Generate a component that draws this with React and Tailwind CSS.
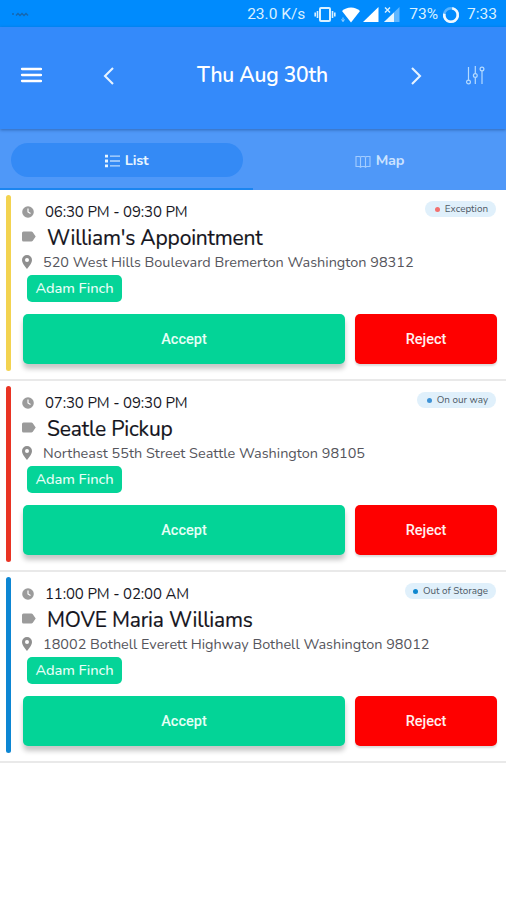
import React, { useState } from 'react';

const appointments = [
  {
    id: 1,
    time: '06:30 PM - 09:30 PM',
    title: "William's Appointment",
    address: '520 West Hills Boulevard Bremerton Washington 98312',
    assignee: 'Adam Finch',
    status: 'Exception',
    bar: 'bg-[#f3d350]',
    dot: 'bg-[#f2706f]',
    badge: 'w-[71px]',
  },
  {
    id: 2,
    time: '07:30 PM - 09:30 PM',
    title: 'Seatle Pickup',
    address: 'Northeast 55th Street Seattle Washington 98105',
    assignee: 'Adam Finch',
    status: 'On our way',
    bar: 'bg-[#e93323]',
    dot: 'bg-[#3f93d6]',
    badge: 'w-[79px]',
  },
  {
    id: 3,
    time: '11:00 PM - 02:00 AM',
    title: 'MOVE Maria Williams',
    address: '18002 Bothell Everett Highway Bothell Washington 98012',
    assignee: 'Adam Finch',
    status: 'Out of Storage',
    bar: 'bg-[#0d86d3]',
    dot: 'bg-[#0f87cf]',
    badge: 'w-[91px]',
  },
];

function StatusBar() {
  return (
    <div className="flex h-[27px] items-center justify-between bg-[#008bfd] pl-[11px] pr-[9px] pt-[2px] font-['Roboto',sans-serif] text-[15.5px] text-[#d9f0ff]">
      <svg width="20" height="8" viewBox="0 0 20 8" fill="none" stroke="#1c5f9c" strokeWidth="1.300" opacity="0.8">
        <path d="M1 3h2M5 4.500l2-2 2 2 2-2 2 2 2-2 2 2" />
      </svg>
      <div className="flex items-center">
        <span className="whitespace-nowrap pt-px">23.0 K/s</span>
        <svg className="ml-[9px]" width="22" height="18" viewBox="0 0 22 18" fill="none" stroke="#d9f0ff">
          <rect x="6" y="2" width="10" height="13" rx="1" strokeWidth="2" />
          <path d="M3.500 5v7M18.500 5v7M1.200 6.500v4M20.800 6.500v4" strokeWidth="1.600" />
        </svg>
        <svg className="ml-[5px]" width="20" height="18" viewBox="0 0 20 18" fill="#fff">
          <path d="M10 16.500 1 5C3.300 2.800 6.500 1.500 10 1.500s6.700 1.300 9 3.500z" />
          <path d="M2 11.500v4M.5 13.500 2 15.500l1.500-2" fill="none" stroke="#9fd4ff" />
        </svg>
        <svg className="ml-[2px]" width="16" height="18" viewBox="0 0 16 18" fill="#fff">
          <path d="M15.500 1v15H0z" />
        </svg>
        <svg className="ml-[5px]" width="16" height="18" viewBox="0 0 16 18">
          <path d="M15.500 1v15H0z" fill="#5fb6ff" />
          <path d="M10 6.500v9.500H0z" fill="#e8f6ff" />
          <path d="M1 1.500l5 5M6 1.500l-5 5" stroke="#d9f0ff" strokeWidth="1.400" />
        </svg>
        <span className="ml-[9px] pt-px">73%</span>
        <svg className="ml-[4px]" width="18" height="18" viewBox="0 0 18 18" fill="none" strokeWidth="2.600">
          <circle cx="9" cy="9" r="6.800" stroke="#57b2ff" />
          <path d="M9 2.200a6.800 6.800 0 1 1-6.800 6.800" stroke="#f0f9ff" transform="rotate(10 9 9)" />
        </svg>
        <span className="ml-[7px] pt-px">7:33</span>
      </div>
    </div>
  );
}

function Header() {
  return (
    <header className="relative z-10 flex h-[102px] items-center justify-between bg-[#348afa] pb-[5px] pl-[20px] pr-[21px] text-white shadow-[0_1px_3px_rgba(20,60,120,0.5)]">
      <div className="flex items-center gap-[60px]">
        <button className="pb-[2px]" aria-label="Menu">
          <svg width="22" height="16" viewBox="0 0 22 16" stroke="currentColor" strokeWidth="2.300" strokeLinecap="round">
            <path d="M2 2h19M2 8h19M2 14h19" />
          </svg>
        </button>
        <button aria-label="Previous day">
          <svg width="14" height="18" viewBox="0 0 14 18" fill="none" stroke="#e6f3ff" strokeWidth="2.100">
            <path d="M11 1 3 9l8 8" />
          </svg>
        </button>
      </div>
      <h1 className="whitespace-nowrap pt-px text-[21px] font-semibold tracking-[-0.25px]">Thu Aug 30th</h1>
      <div className="flex items-center gap-[42px]">
        <button aria-label="Next day">
          <svg width="14" height="18" viewBox="0 0 14 18" fill="none" stroke="#e6f3ff" strokeWidth="2.100">
            <path d="m3 1 8 8-8 8" />
          </svg>
        </button>
        <button aria-label="Filters">
          <svg width="20" height="20" viewBox="0 0 20 20" fill="none" stroke="#b5dbff" strokeWidth="1.200">
            <path d="M3.500 1v13.500M10.300 0v7.500M10.300 11.500V18M17 4.500V18" />
            <circle cx="3.500" cy="16" r="1.900" />
            <circle cx="10.300" cy="9.500" r="1.900" />
            <circle cx="17" cy="3" r="1.900" />
          </svg>
        </button>
      </div>
    </header>
  );
}

function Tabs({ tab, setTab }) {
  return (
    <nav className="grid h-[61px] grid-cols-2 bg-[#4f98f8] text-[14.500px] font-bold tracking-[-0.2px]">
      <button
        onClick={() => setTab('list')}
        className={`flex items-center justify-center border-b-2 pl-[11px] pr-[10px] pt-[3px] ${tab === 'list' ? 'border-[#1b85f0] text-[#e8f5ff]' : 'border-transparent text-[#cfe4ff]'}`}
      >
        <span className="flex h-[34px] w-full items-center justify-center gap-[5px] rounded-full bg-[#348af5] pr-[2px] pt-[2px]">
          <svg width="16" height="14" viewBox="0 0 16 14" fill="none" stroke="currentColor">
            <path d="M1 2.200h3M1 7h3M1 11.800h3" strokeWidth="2.800" />
            <path d="M6 2.200h10M6 7h10M6 11.800h10" strokeWidth="1.300" opacity="0.75" />
          </svg>
          List
        </span>
      </button>
      <button
        onClick={() => setTab('map')}
        className="flex items-center justify-center gap-[5px] pt-[3px] text-[#cbe2ff]"
      >
        <svg width="16" height="13" viewBox="0 0 16 13" fill="none" stroke="#a3ccff" strokeWidth="1.100">
          <path d="M1 1.500h3.500l1 .8 1-.8H9.500l1 .8 1-.8H15v10h-3.500l-1 .8-1-.8h-3l-1 .8-1-.8H1zM5.500 2.300v10M10.500 2.300v10" />
        </svg>
        Map
      </button>
    </nav>
  );
}

function AppointmentCard({ item }) {
  return (
    <li className="flex h-[191px] border-b-2 border-[#e9e9e9] pl-[6px] pr-[9px] pt-[5px]">
      <div className={`h-[176px] w-[5px] shrink-0 rounded-full ${item.bar}`} />
      <div className="ml-[11px] flex min-w-0 flex-1 flex-col">
        <div className="flex h-[30px] items-start justify-between">
          <div className="flex h-[34px] items-center">
            <svg className="mb-px" width="12" height="12" viewBox="0 0 12 12">
              <circle cx="6" cy="6" r="5.800" fill="#9b9b9b" />
              <path d="M6 2.500V6l2.500 1.500" stroke="#fff" fill="none" strokeWidth="1.200" />
            </svg>
            <span className="ml-[11px] whitespace-nowrap text-[15px] tracking-[-0.15px] text-[#17171f]">{item.time}</span>
          </div>
          <span className={`mr-px mt-[6px] flex h-[16px] items-center justify-end gap-[5px] rounded-full bg-[#e0f0fb] pr-[8px] text-[9.900px] text-[#4e5a66] ${item.badge}`}>
            <i className={`size-[5px] rounded-full ${item.dot}`} />
            <span className="whitespace-nowrap pt-px">{item.status}</span>
          </span>
        </div>
        <div className="flex h-[24px] items-center">
          <svg className="mb-[2px]" width="14" height="11" viewBox="0 0 14 11" fill="#9b9b9b">
            <path d="M1.500.5h7.800c.6 0 1.100.2 1.500.7L13.700 5.500l-2.900 4.300c-.4.500-.9.700-1.500.7H1.500a1.500 1.500 0 0 1-1.500-1.500V2A1.500 1.500 0 0 1 1.500.5z" />
          </svg>
          <h2 className="ml-[11px] whitespace-nowrap pt-[2px] text-[21px] leading-none tracking-[-0.17px] text-[#14141c] [-webkit-text-stroke:0.2px]">{item.title}</h2>
        </div>
        <div className="flex h-[25px] items-center">
          <svg width="10" height="14" viewBox="0 0 10 14" fill="#8f8f8f" fillRule="evenodd">
            <path d="M5 0a5 5 0 0 0-5 5c0 3.600 5 9 5 9s5-5.400 5-9a5 5 0 0 0-5-5zm0 3a2 2 0 1 1 0 4 2 2 0 0 1 0-4z" />
          </svg>
          <span className="ml-[11px] whitespace-nowrap pt-[2px] text-[14.450px] text-[#55555c]">{item.address}</span>
        </div>
        <span className="ml-[5px] mt-px flex h-[27px] w-[95px] items-center justify-center rounded-[5px] bg-[#05d498] text-[14.700px] font-medium tracking-[-0.1px] text-[#eafff8]">
          {item.assignee}
        </span>
        <div className="ml-px mt-[12px] flex gap-[10px] font-['Roboto',sans-serif] text-[14.500px] font-medium">
          <button className="h-[50px] w-[322px] rounded-[5px] bg-[#03d497] pt-[2px] text-[#e6fff6] shadow-[0_5px_5px_rgba(0,0,0,0.22)]">Accept</button>
          <button className="h-[50px] flex-1 rounded-[5px] bg-[#fe0000] pt-[2px] text-[#fff0f0] shadow-[0_2px_2px_rgba(0,0,0,0.14)]">Reject</button>
        </div>
      </div>
    </li>
  );
}

export default function App() {
  const [tab, setTab] = useState('list');

  return (
    <div className="flex h-[900px] w-[506px] flex-col overflow-hidden bg-white font-['Nunito','Lato',sans-serif]">
      <StatusBar />
      <Header />
      <Tabs tab={tab} setTab={setTab} />
      <ul>
        {appointments.map((item) => (
          <AppointmentCard key={item.id} item={item} />
        ))}
      </ul>
    </div>
  );
}
